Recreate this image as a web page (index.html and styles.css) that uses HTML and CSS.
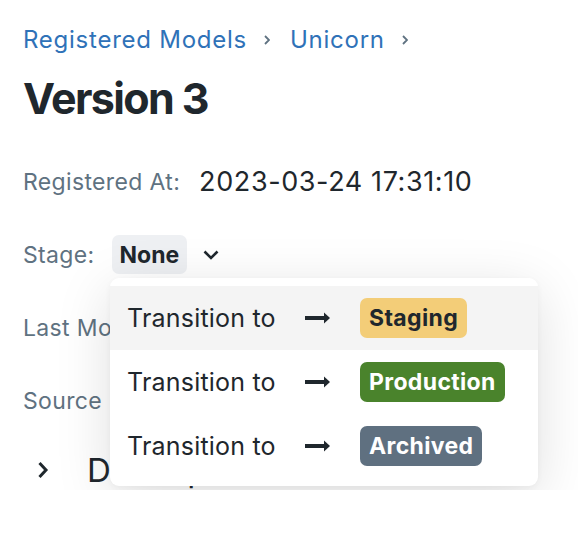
FILE: index.html
```html
<!DOCTYPE html>
<html>
<head>
<meta charset="utf-8">
<link rel="stylesheet" href="styles.css">
</head>
<body>
<div class="page">
  <nav class="crumbs">
    <a class="crumb">Registered Models</a>
    <svg class="sep" width="6" height="10" viewBox="0 0 6 10"><path d="M1 1 L5 5 L1 9" fill="none" stroke="#5f7281" stroke-width="1.8"/></svg>
    <a class="crumb">Unicorn</a>
    <svg class="sep" width="6" height="10" viewBox="0 0 6 10"><path d="M1 1 L5 5 L1 9" fill="none" stroke="#5f7281" stroke-width="1.8"/></svg>
  </nav>
  <h1 class="title">Version 3</h1>
  <div class="meta">
    <div class="row"><span class="label">Registered At:</span><span class="value">2023-03-24 17:31:10</span></div>
    <div class="row stage-row">
      <span class="label">Stage:</span>
      <span class="pill">None</span>
      <svg class="caret" width="16" height="10" viewBox="0 0 16 10"><path d="M1.5 1.5 L8 8 L14.5 1.5" fill="none" stroke="#1f272d" stroke-width="2.6"/></svg>
      <div class="menu">
        <div class="item active">
          <span class="item-text">Transition to</span>
          <svg class="arrow" width="25" height="12" viewBox="0 0 25 12"><rect x="0" y="4" width="20" height="4" fill="#1f272d"/><path d="M19 0.5 L25 6 L19 11.5 Z" fill="#1f272d"/></svg>
          <span class="badge staging">Staging</span>
        </div>
        <div class="item">
          <span class="item-text">Transition to</span>
          <svg class="arrow" width="25" height="12" viewBox="0 0 25 12"><rect x="0" y="4" width="20" height="4" fill="#1f272d"/><path d="M19 0.5 L25 6 L19 11.5 Z" fill="#1f272d"/></svg>
          <span class="badge production">Production</span>
        </div>
        <div class="item">
          <span class="item-text">Transition to</span>
          <svg class="arrow" width="25" height="12" viewBox="0 0 25 12"><rect x="0" y="4" width="20" height="4" fill="#1f272d"/><path d="M19 0.5 L25 6 L19 11.5 Z" fill="#1f272d"/></svg>
          <span class="badge archived">Archived</span>
        </div>
      </div>
    </div>
    <div class="row"><span class="label">Last Modified:</span><span class="value">2023-03-24 17:31:10</span></div>
    <div class="row"><span class="label wide">Source Run:</span><span class="value">Run 1</span></div>
  </div>
  <div class="section">
    <svg class="expander" width="12" height="18" viewBox="0 0 12 18"><path d="M2.5 2 L9 9 L2.5 16" fill="none" stroke="#1f272d" stroke-width="3"/></svg>
    <span class="section-title">Description</span>
  </div>
</div>
</body>
</html>
```

FILE: styles.css
```css
html, body {
  margin: 0;
  padding: 0;
  background: #ffffff;
}
body {
  font-family: Inter, "Noto Sans", "Liberation Sans", sans-serif;
  color: #1f272d;
  overflow: hidden;
}
.page {
  padding: 26px 0 0 23px;
}
.crumbs {
  display: flex;
  align-items: center;
  height: 28px;
  font-size: 24px;
  line-height: 28px;
  letter-spacing: 0.75px;
  white-space: nowrap;
}
.crumb {
  color: #2f72b8;
}
.sep {
  margin: 0 20px 0 17px;
}
.title {
  margin: 18px 0 0 0;
  font-size: 43px;
  line-height: 52px;
  font-weight: 700;
  letter-spacing: -1.6px;
}
.meta {
  margin-top: 38px;
  display: flex;
  flex-direction: column;
  row-gap: 34px;
}
.row {
  display: flex;
  align-items: center;
  height: 39px;
  font-size: 23px;
  white-space: nowrap;
}
.stage-row {
  position: relative;
}
.label {
  color: #5f7281;
  letter-spacing: 0.35px;
}
.label.wide {
  word-spacing: 4px;
}
.value {
  margin-left: 19px;
  font-size: 27px;
  letter-spacing: 0.6px;
}
.pill {
  margin-left: 17px;
  height: 39px;
  padding: 0 8px;
  display: flex;
  align-items: center;
  background: #eef0f3;
  border-radius: 7px;
  font-weight: 700;
}
.caret {
  margin-left: 16px;
}
.menu {
  position: absolute;
  left: 87px;
  top: 43px;
  width: 428px;
  padding: 8px 0;
  background: #ffffff;
  border-radius: 9px;
  box-shadow: 0 12px 55px rgba(0, 0, 0, 0.13), 0 2px 6px rgba(0, 0, 0, 0.04);
  z-index: 10;
}
.item {
  height: 64px;
  display: flex;
  align-items: center;
  padding-left: 17px;
  font-size: 25px;
  letter-spacing: 0.2px;
  white-space: nowrap;
}
.item.active {
  background: #f4f4f4;
}
.item-text {
  width: 148px;
  flex-shrink: 0;
}
.arrow {
  margin-left: 30px;
  flex-shrink: 0;
}
.badge {
  margin-left: 30px;
  height: 40px;
  padding: 0 9px;
  display: flex;
  align-items: center;
  border-radius: 7px;
  font-size: 23px;
  font-weight: 700;
  letter-spacing: 0.35px;
}
.staging {
  background: #f3cd78;
  color: #1f272d;
}
.production {
  background: #4a832c;
  color: #ffffff;
}
.archived {
  background: #5f7080;
  color: #ffffff;
}
.section {
  margin-top: 30px;
  display: flex;
  align-items: center;
  height: 40px;
  padding-left: 14px;
}
.expander {
  display: block;
}
.section-title {
  margin-left: 38px;
  font-size: 33px;
  line-height: 40px;
}
```
